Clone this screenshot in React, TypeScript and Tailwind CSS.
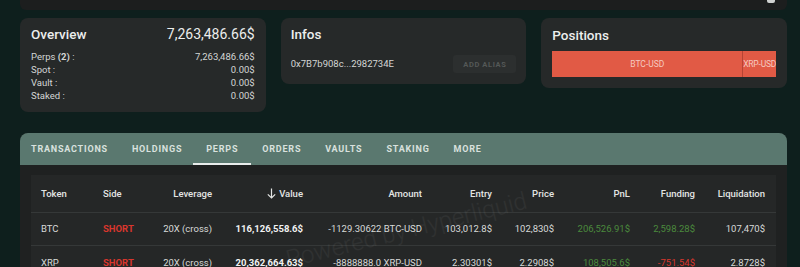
import React from "react";

const font = { fontFamily: "Roboto, 'Noto Sans', sans-serif" };

function Row({ label, value }: { label: React.ReactNode; value: string }) {
  return (
    <div className="flex justify-between text-[9.5px] leading-[13px] text-[#d4d6d5]">
      <span>{label}</span>
      <span>{value}</span>
    </div>
  );
}

const tabs = ["TRANSACTIONS", "HOLDINGS", "PERPS", "ORDERS", "VAULTS", "STAKING", "MORE"];

function DownArrow() {
  return (
    <svg width="9" height="11" viewBox="0 0 9 11" className="inline-block mr-[3px] -mt-[2px] align-middle">
      <path d="M4.5 0.5 V10 M0.8 6.3 L4.5 10 L8.2 6.3" stroke="#e3e5e4" strokeWidth="1.2" fill="none" />
    </svg>
  );
}

export default function App() {
  return (
    <div style={font} className="w-[800px] h-[267px] overflow-hidden bg-[#0e1f1d] relative">
      {/* top strip */}
      <div className="ml-[20px] w-[767px] h-[10px] bg-[#1c1e1e] rounded-b-[6px] relative">
        <div className="absolute right-[12px] top-0 w-[8px] h-[3px] bg-[#cfd2d1] rounded-b-[2px]" />
      </div>

      {/* cards */}
      <div className="ml-[20px] w-[767px] mt-[8px] grid grid-cols-3 gap-[15px] items-start">
        <div className="bg-[#262929] rounded-[8px] h-[94px] px-[11px] pt-[6px]">
          <div className="flex justify-between items-center">
            <span className="text-[13.5px] font-medium text-[#eceeed]">Overview</span>
            <span className="text-[14px] text-[#eceeed]">7,263,486.66$</span>
          </div>
          <div className="mt-[5px]">
            <Row label={<>Perps <b className="font-bold">(2)</b> :</>} value="7,263,486.66$" />
            <Row label="Spot :" value="0.00$" />
            <Row label="Vault :" value="0.00$" />
            <Row label="Staked :" value="0.00$" />
          </div>
        </div>

        <div className="bg-[#262929] rounded-[8px] h-[66px] px-[10px] pt-[6px]">
          <div className="text-[13.5px] font-medium text-[#eceeed]">Infos</div>
          <div className="mt-[11px] flex justify-between items-center">
            <span className="text-[9.5px] text-[#d4d6d5]">0x7B7b908c...2982734E</span>
            <span className="bg-[#2c2f2f] rounded-[3px] w-[63px] h-[18px] flex items-center justify-center text-[7.5px] font-bold tracking-[0.6px] text-[#545857]">
              ADD ALIAS
            </span>
          </div>
        </div>

        <div className="bg-[#262929] rounded-[8px] h-[70px] px-[11px] pt-[7px]">
          <div className="text-[13.5px] font-medium text-[#eceeed]">Positions</div>
          <div className="mt-[6px] flex h-[26px] text-[8.5px] text-[#f6c9c0] whitespace-nowrap">
            <div className="w-[190px] bg-[#e15a45] flex items-center justify-center">BTC-USD</div>
            <div className="flex-1 bg-[#e15a45] border-l border-[#b64434] flex items-center justify-center overflow-hidden tracking-[-0.2px]">XRP-USD</div>
          </div>
        </div>
      </div>

      {/* table panel */}
      <div className="ml-[20px] w-[767px] mt-[21px] rounded-t-[8px] bg-[#1f2121] relative">
        <div className="h-[32px] bg-[#5a786f] rounded-t-[8px] flex items-stretch pl-[11px] text-[9px] font-bold tracking-[0.8px] text-[#d9e1de]">
          {tabs.map((t) => (
            <div key={t} className="relative flex items-center pt-[2px] px-[12px] first:pl-0">
              {t}
              {t === "PERPS" && (
                <div className="absolute -left-[1px] -right-[1px] bottom-0 h-[2px] bg-[#e8eceb]" />
              )}
            </div>
          ))}
        </div>
        <div className="px-[11px] pt-[10px]">
          <div className="bg-[#252727] h-[200px] text-[9.5px]">
            <div className="h-[38px] flex items-center border-b border-[#353838] text-[#e3e5e4] font-medium pt-[1px]">
              <div className="w-[72px] pl-[10px]">Token</div>
              <div className="w-[45px]">Side</div>
              <div className="w-[64px] text-right">Leverage</div>
              <div className="w-[91px] text-right"><DownArrow />Value</div>
              <div className="w-[119px] text-right">Amount</div>
              <div className="w-[70px] text-right">Entry</div>
              <div className="w-[62px] text-right">Price</div>
              <div className="w-[76px] text-right">PnL</div>
              <div className="w-[65px] text-right">Funding</div>
              <div className="w-[70px] text-right">Liquidation</div>
            </div>
            <div className="h-[33px] flex items-center border-b border-[#353838] text-[#d8dad9] pt-[1px]">
              <div className="w-[72px] pl-[10px]">BTC</div>
              <div className="w-[45px] text-[#d8362d] font-bold">SHORT</div>
              <div className="w-[64px] text-right">20X (cross)</div>
              <div className="w-[91px] text-right font-bold text-[#f1f2f2]">116,126,558.6$</div>
              <div className="w-[119px] text-right">-1129.30622 BTC-USD</div>
              <div className="w-[70px] text-right">103,012.8$</div>
              <div className="w-[62px] text-right">102,830$</div>
              <div className="w-[76px] text-right text-[#4b8a3d]">206,526.91$</div>
              <div className="w-[65px] text-right text-[#4b8a3d]">2,598.28$</div>
              <div className="w-[70px] text-right">107,470$</div>
            </div>
            <div className="h-[33px] flex items-center text-[#d8dad9] pt-[1px]">
              <div className="w-[72px] pl-[10px]">XRP</div>
              <div className="w-[45px] text-[#d8362d] font-bold">SHORT</div>
              <div className="w-[64px] text-right">20X (cross)</div>
              <div className="w-[91px] text-right font-bold text-[#f1f2f2]">20,362,664.63$</div>
              <div className="w-[119px] text-right">-8888888.0 XRP-USD</div>
              <div className="w-[70px] text-right">2.30301$</div>
              <div className="w-[62px] text-right">2.2908$</div>
              <div className="w-[76px] text-right text-[#4b8a3d]">108,505.6$</div>
              <div className="w-[65px] text-right text-[#d8362d]">-751.54$</div>
              <div className="w-[70px] text-right">2.8728$</div>
            </div>
          </div>
        </div>
        <div className="absolute left-[263px] top-[79px] -rotate-[14deg] text-[24px] font-light text-white/[0.05] whitespace-nowrap pointer-events-none">
          Powered by Hyperliquid
        </div>
      </div>
    </div>
  );
}
